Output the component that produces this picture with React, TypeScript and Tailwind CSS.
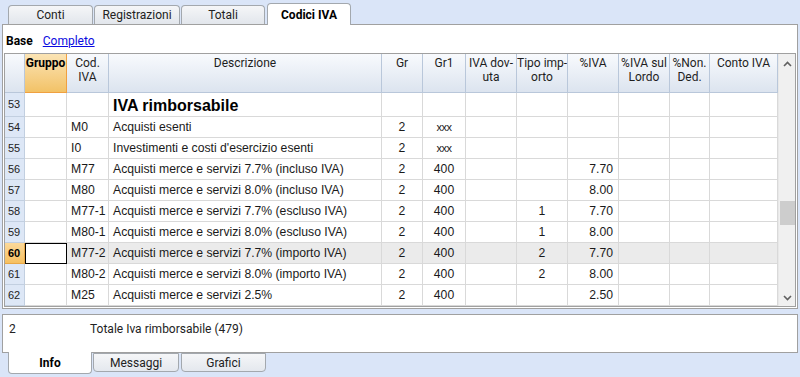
import React from 'react'

interface Row {
  n: number
  title?: string
  cod?: string
  desc?: string
  gr?: string
  gr1?: string
  tipo?: string
  iva?: string
  sel?: boolean
}

const rows: Row[] = [
  { n: 53, title: 'IVA rimborsabile' },
  { n: 54, cod: 'M0', desc: 'Acquisti esenti', gr: '2', gr1: 'xxx' },
  { n: 55, cod: 'I0', desc: "Investimenti e costi d'esercizio esenti", gr: '2', gr1: 'xxx' },
  { n: 56, cod: 'M77', desc: 'Acquisti merce e servizi 7.7% (incluso IVA)', gr: '2', gr1: '400', iva: '7.70' },
  { n: 57, cod: 'M80', desc: 'Acquisti merce e servizi 8.0% (incluso IVA)', gr: '2', gr1: '400', iva: '8.00' },
  { n: 58, cod: 'M77-1', desc: 'Acquisti merce e servizi 7.7% (escluso IVA)', gr: '2', gr1: '400', tipo: '1', iva: '7.70' },
  { n: 59, cod: 'M80-1', desc: 'Acquisti merce e servizi 8.0% (escluso IVA)', gr: '2', gr1: '400', tipo: '1', iva: '8.00' },
  { n: 60, cod: 'M77-2', desc: 'Acquisti merce e servizi 7.7% (importo IVA)', gr: '2', gr1: '400', tipo: '2', iva: '7.70', sel: true },
  { n: 61, cod: 'M80-2', desc: 'Acquisti merce e servizi 8.0% (importo IVA)', gr: '2', gr1: '400', tipo: '2', iva: '8.00' },
  { n: 62, cod: 'M25', desc: 'Acquisti merce e servizi 2.5%', gr: '2', gr1: '400', iva: '2.50' }
]

const topTabs = [
  { label: 'Conti', w: 'w-[85px]' },
  { label: 'Registrazioni', w: 'w-[86px]' },
  { label: 'Totali', w: 'w-[84px]' }
]

const Head: React.FC<{ w: string; children?: React.ReactNode; orange?: boolean }> = ({ w, children, orange }) => (
  <div
    className={`${w} h-full shrink-0 border-r border-b text-center leading-[14px] pt-[2px] whitespace-nowrap overflow-hidden ${
      orange
        ? 'bg-gradient-to-b from-[#fbe4b4] to-[#f2c266] border-r-[#f0a040] border-b-[#f0a040] font-bold text-black'
        : 'bg-gradient-to-b from-[#f8fafd] to-[#dce4ef] border-[#b9c7da] text-[#1e1e1e]'
    }`}
  >
    {children}
  </div>
)

const Cell: React.FC<{ w: string; className?: string; children?: React.ReactNode }> = ({ w, className = '', children }) => (
  <div className={`${w} h-full shrink-0 border-r border-b border-[#d9d9d9] flex items-center px-[4px] whitespace-nowrap overflow-hidden ${className}`}>
    {children}
  </div>
)

const Chevron: React.FC<{ up?: boolean }> = ({ up }) => (
  <svg width="9" height="6" viewBox="0 0 9 6" className="text-[#606060]">
    <path d={up ? 'M1 5 L4.5 1.5 L8 5' : 'M1 1 L4.5 4.5 L8 1'} fill="none" stroke="currentColor" strokeWidth="1.6" />
  </svg>
)

export default function App() {
  return (
    <div className="w-[800px] h-[377px] bg-[#dae5f8] overflow-hidden font-['Liberation_Sans',Arial,sans-serif] text-[12.2px] text-[#1a1a1a]">
      {/* top tabs */}
      <div className="h-[24px] flex items-end pl-[8px] gap-[1px] font-['Roboto',sans-serif] text-[12px]">
        {topTabs.map(t => (
          <div
            key={t.label}
            className={`${t.w} h-[19px] flex items-center justify-center rounded-t-[4px] border border-b-0 border-[#a3a8ae] bg-gradient-to-b from-[#f5f6f8] to-[#e2e6ec] text-[#222]`}
          >
            {t.label}
          </div>
        ))}
        <div className="w-[84px] h-[22px] -mb-px ml-[1px] relative z-10 flex items-center justify-center rounded-t-[4px] border border-b-0 border-[#a3a8ae] bg-white font-bold text-black">
          Codici IVA
        </div>
      </div>

      {/* main panel */}
      <div className="ml-[2px] w-[796px] h-[285px] border border-[#a0a0a0] bg-white flex flex-col">
        <div className="h-[28px] flex items-center gap-[10px] pl-[3px] pt-[3px] font-['Roboto',sans-serif] text-[12px]">
          <span className="font-bold text-black">Base</span>
          <span className="text-[#0a0ae0] underline">Completo</span>
        </div>
        <div className="mx-[1px] h-[254px] border border-[#a0a0a0] flex">
          <div className="w-[773px] flex flex-col">
            {/* header */}
            <div className="h-[39px] flex font-['Roboto',sans-serif] text-[12px]">
              <Head w="w-[20px]" />
              <Head w="w-[42px]" orange>Gruppo</Head>
              <Head w="w-[42px]">Cod.<br />IVA</Head>
              <Head w="w-[273px]">Descrizione</Head>
              <Head w="w-[41px]">Gr</Head>
              <Head w="w-[43px]">Gr1</Head>
              <Head w="w-[51px]">IVA dov-<br />uta</Head>
              <Head w="w-[51px]">Tipo imp-<br />orto</Head>
              <Head w="w-[51px]">%IVA</Head>
              <Head w="w-[51px]">%IVA sul<br />Lordo</Head>
              <Head w="w-[40px]">%Non.<br />Ded.</Head>
              <Head w="w-[68px]">Conto IVA</Head>
            </div>
            {rows.map(r => (
              <div key={r.n} className={`${r.title ? 'h-[24px]' : 'h-[21px]'} flex ${r.sel ? 'bg-[#ebebeb]' : ''}`}>
                <div
                  className={`w-[20px] h-full shrink-0 border-r border-b flex items-center pl-[3px] text-[11px] ${
                    r.sel
                      ? 'bg-gradient-to-b from-[#fcd99a] to-[#f6c060] border-[#e8a848] font-bold text-black'
                      : 'bg-[#dde7f6] border-[#c2cfe0] text-[#222]'
                  }`}
                >
                  {r.n}
                </div>
                <Cell w="w-[42px]" className={r.sel ? '!border !border-black bg-white' : ''} />
                <Cell w="w-[42px]">{r.cod}</Cell>
                <Cell w="w-[273px]" className={r.title ? 'text-[16px] font-bold text-black pt-[2px]' : ''}>
                  {r.title ?? r.desc}
                </Cell>
                <Cell w="w-[41px]" className="justify-center">{r.gr}</Cell>
                <Cell w="w-[43px]" className={`justify-center ${r.gr1 === 'xxx' ? 'text-[11px] tracking-[-0.5px]' : ''}`}>
                  {r.gr1}
                </Cell>
                <Cell w="w-[51px]" />
                <Cell w="w-[51px]" className="justify-center">{r.tipo}</Cell>
                <Cell w="w-[51px]" className="justify-end pr-[5px]">{r.iva}</Cell>
                <Cell w="w-[51px]" />
                <Cell w="w-[40px]" />
                <Cell w="w-[68px]" />
              </div>
            ))}
          </div>
          {/* scrollbar */}
          <div className="w-[17px] bg-[#f0f0f0] flex flex-col items-center border-l border-[#e8e8e8]">
            <div className="h-[17px] flex items-center justify-center mt-[1px]">
              <Chevron up />
            </div>
            <div className="h-[129px]" />
            <div className="w-[15px] h-[24px] bg-[#cdcdcd]" />
            <div className="flex-1" />
            <div className="h-[17px] flex items-center justify-center">
              <Chevron />
            </div>
          </div>
        </div>
      </div>

      {/* info panel */}
      <div className="mt-[5px] ml-[2px] w-[796px] h-[39px] border border-[#a0a0a0] bg-white flex items-start pt-[5px] font-['Roboto',sans-serif] text-[12px] text-[#222]">
        <span className="w-[87px] pl-[6px]">2</span>
        <span>Totale Iva rimborsabile (479)</span>
      </div>

      {/* bottom tabs */}
      <div className="flex items-start pl-[8px] gap-[1px] -mt-px font-['Roboto',sans-serif] text-[12px]">
        <div className="w-[84px] h-[22px] relative z-10 flex items-center justify-center rounded-b-[4px] border border-t-0 border-[#a3a8ae] bg-white font-bold text-black">
          Info
        </div>
        <div className="w-[86px] h-[19px] mt-px flex items-center justify-center rounded-b-[4px] border border-[#a3a8ae] bg-gradient-to-b from-[#f5f6f8] to-[#e4e8ee] text-[#222]">
          Messaggi
        </div>
        <div className="w-[85px] h-[19px] mt-px ml-[1px] flex items-center justify-center rounded-b-[4px] border border-[#a3a8ae] bg-gradient-to-b from-[#f5f6f8] to-[#e4e8ee] text-[#222]">
          Grafici
        </div>
      </div>
    </div>
  )
}
